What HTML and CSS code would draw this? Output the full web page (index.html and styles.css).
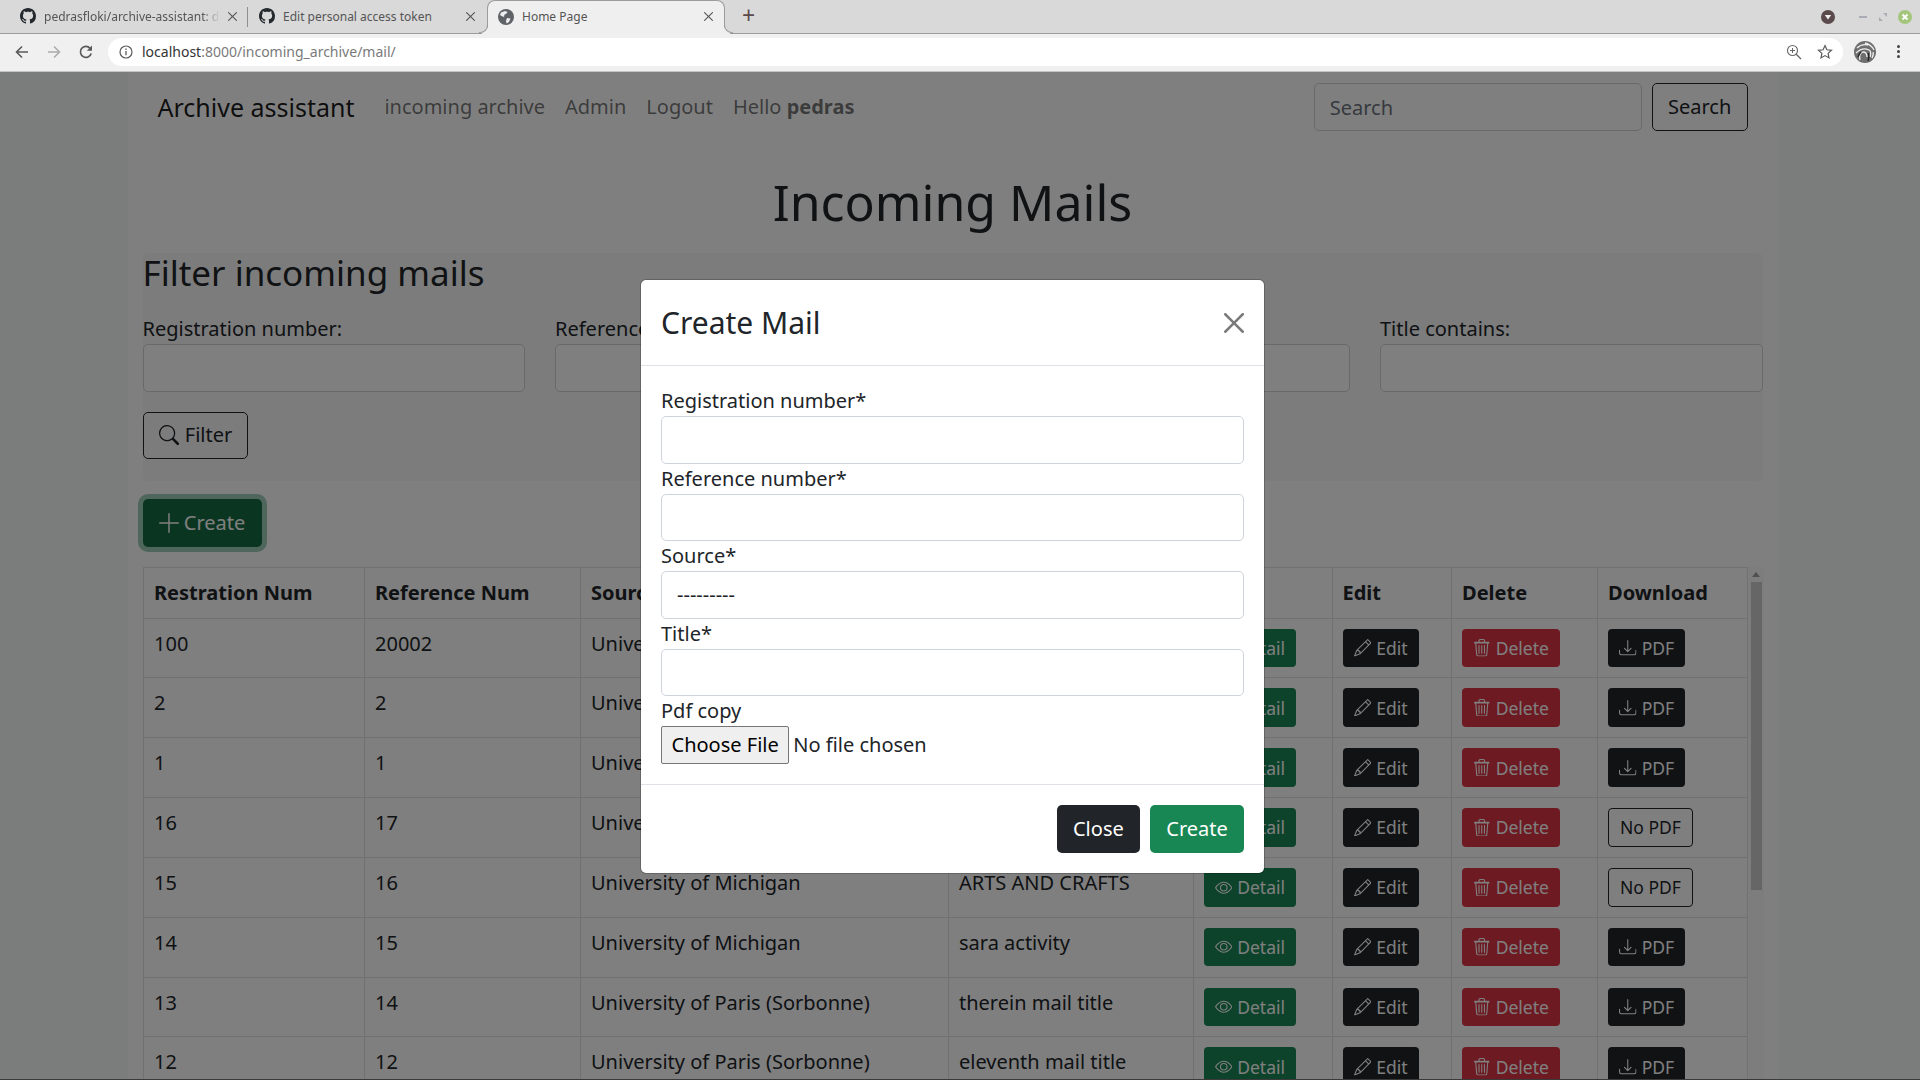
FILE: index.html
```html
<!DOCTYPE html>
<html>
<head>
  <title>Home Page</title>
  <link rel="stylesheet" href="styles.css">
</head>
<body>
  <svg class="icon-defs" width="0" height="0">
    <symbol id="i-eye" viewBox="0 0 16 16"><path d="M16 8s-3-5.5-8-5.5S0 8 0 8s3 5.5 8 5.5S16 8 16 8zM1.173 8a13.133 13.133 0 0 1 1.66-2.043C4.12 4.668 5.88 3.5 8 3.5c2.12 0 3.879 1.168 5.168 2.457A13.133 13.133 0 0 1 14.828 8c-.058.087-.122.183-.195.288-.335.48-.83 1.12-1.465 1.755C11.879 11.332 10.119 12.5 8 12.5c-2.12 0-3.879-1.168-5.168-2.457A13.134 13.134 0 0 1 1.172 8z"/><path d="M8 5.5a2.5 2.5 0 1 0 0 5 2.5 2.5 0 0 0 0-5zM4.5 8a3.5 3.5 0 1 1 7 0 3.5 3.5 0 0 1-7 0z"/></symbol>
    <symbol id="i-pencil" viewBox="0 0 16 16"><path d="M12.146.146a.5.5 0 0 1 .708 0l3 3a.5.5 0 0 1 0 .708l-10 10a.5.5 0 0 1-.168.11l-5 2a.5.5 0 0 1-.65-.65l2-5a.5.5 0 0 1 .11-.168l10-10zM11.207 2.5 13.5 4.793 14.793 3.5 12.5 1.207 11.207 2.5zm1.586 3L10.5 3.207 4 9.707V10h.5a.5.5 0 0 1 .5.5v.5h.5a.5.5 0 0 1 .5.5v.5h.293l6.5-6.5zm-9.761 5.175-.106.106-1.528 3.821 3.821-1.528.106-.106A.5.5 0 0 1 5 12.5V12h-.5a.5.5 0 0 1-.5-.5V11h-.5a.5.5 0 0 1-.468-.325z"/></symbol>
    <symbol id="i-trash" viewBox="0 0 16 16"><path d="M6.5 1h3a.5.5 0 0 1 .5.5v1H6v-1a.5.5 0 0 1 .5-.5ZM11 2.5v-1A1.5 1.5 0 0 0 9.5 0h-3A1.5 1.5 0 0 0 5 1.5v1H1.5a.5.5 0 0 0-.5.5v1h1.04l.85 10.66A2 2 0 0 0 4.88 16h6.24a2 2 0 0 0 1.99-1.84L13.96 4H15V3a.5.5 0 0 0-.5-.5H11Zm1.96 1.5-.85 10.08a1 1 0 0 1-1 .92H4.89a1 1 0 0 1-1-.92L3.04 4h9.92ZM5.5 5.5a.5.5 0 0 1 .5.5v7a.5.5 0 0 1-1 0V6a.5.5 0 0 1 .5-.5Zm2.5 0a.5.5 0 0 1 .5.5v7a.5.5 0 0 1-1 0V6a.5.5 0 0 1 .5-.5Zm2.5 0a.5.5 0 0 1 .5.5v7a.5.5 0 0 1-1 0V6a.5.5 0 0 1 .5-.5Z"/></symbol>
    <symbol id="i-download" viewBox="0 0 16 16"><path d="M.5 9.9a.5.5 0 0 1 .5.5v2.5a1 1 0 0 0 1 1h12a1 1 0 0 0 1-1v-2.5a.5.5 0 0 1 1 0v2.5a2 2 0 0 1-2 2H2a2 2 0 0 1-2-2v-2.5a.5.5 0 0 1 .5-.5z"/><path d="M7.646 11.854a.5.5 0 0 0 .708 0l3-3a.5.5 0 0 0-.708-.708L8.5 10.293V1.5a.5.5 0 0 0-1 0v8.793L5.354 8.146a.5.5 0 1 0-.708.708l3 3z"/></symbol>
    <symbol id="i-search" viewBox="0 0 16 16"><path d="M11.742 10.344a6.5 6.5 0 1 0-1.397 1.398h-.001c.03.04.062.078.098.115l3.85 3.85a1 1 0 0 0 1.415-1.414l-3.85-3.85a1.007 1.007 0 0 0-.115-.1zM12 6.5a5.5 5.5 0 1 1-11 0 5.5 5.5 0 0 1 11 0z"/></symbol>
    <symbol id="i-plus" viewBox="0 0 16 16"><path d="M8 0a.6.6 0 0 1 .6.6v6.8h6.8a.6.6 0 0 1 0 1.2H8.6v6.8a.6.6 0 0 1-1.2 0V8.6H.6a.6.6 0 0 1 0-1.2h6.8V.6A.6.6 0 0 1 8 0z"/></symbol>
    <symbol id="i-github" viewBox="0 0 16 16"><path d="M8 0C3.58 0 0 3.58 0 8c0 3.54 2.29 6.53 5.47 7.59.4.07.55-.17.55-.38 0-.19-.01-.82-.01-1.49-2.01.37-2.53-.49-2.69-.94-.09-.23-.48-.94-.82-1.13-.28-.15-.68-.52-.01-.53.63-.01 1.08.58 1.23.82.72 1.21 1.87.87 2.33.66.07-.52.28-.87.51-1.07-1.78-.2-3.64-.89-3.64-3.95 0-.87.31-1.59.82-2.15-.08-.2-.36-1.02.08-2.12 0 0 .67-.21 2.2.82.64-.18 1.32-.27 2-.27.68 0 1.36.09 2 .27 1.53-1.04 2.2-.82 2.2-.82.44 1.1.16 1.92.08 2.12.51.56.82 1.27.82 2.15 0 3.07-1.87 3.75-3.65 3.95.29.25.54.73.54 1.48 0 1.07-.01 1.93-.01 2.2 0 .21.15.46.55.38A8.013 8.013 0 0016 8c0-4.42-3.58-8-8-8z"/></symbol>
    <symbol id="i-x" viewBox="0 0 16 16"><path d="M.293.293a1 1 0 011.414 0L8 6.586 14.293.293a1 1 0 111.414 1.414L9.414 8l6.293 6.293a1 1 0 01-1.414 1.414L8 9.414l-6.293 6.293a1 1 0 01-1.414-1.414L6.586 8 .293 1.707a1 1 0 010-1.414z"/></symbol>
  </svg>

  <!-- Browser chrome -->
  <div class="tab-strip">
    <div class="tab">
      <svg class="tab-icon"><use href="#i-github"/></svg>
      <span class="tab-title tab-fade">pedrasfloki/archive-assistant: django app</span>
      <svg class="tab-close"><use href="#i-x"/></svg>
    </div>
    <div class="tab tab-sep">
      <svg class="tab-icon"><use href="#i-github"/></svg>
      <span class="tab-title">Edit personal access token</span>
      <svg class="tab-close"><use href="#i-x"/></svg>
    </div>
    <div class="tab tab-active">
      <svg class="tab-icon" viewBox="0 0 16 16">
        <circle cx="8" cy="8" r="8" fill="#5f6368"/>
        <path d="M3 3.5 7 2l2.5 1L8 5 6.5 5.5 6 8 3.5 7 2 6zM9 9l3.5 0.5L11 13l-2.5 1.5L8 12z" fill="#efefef"/>
      </svg>
      <span class="tab-title">Home Page</span>
      <svg class="tab-close"><use href="#i-x"/></svg>
    </div>
    <div class="tab-new">+</div>
    <div class="window-controls">
      <svg class="win-menu" viewBox="0 0 14 14"><circle cx="7" cy="7" r="7" fill="#5b4a4c"/><path d="M3.8 5h6.4L7 9.5z" fill="#efefef"/></svg>
      <span class="win-min"></span>
      <svg class="win-restore" viewBox="0 0 8 8"><path d="M4 0h4v4zM0 4l4 4H0z" fill="#a9adb3"/></svg>
      <svg class="win-close" viewBox="0 0 14 14"><circle cx="7" cy="7" r="7" fill="#a3c67c"/><path d="M4.5 4.5l5 5m0-5l-5 5" stroke="#fff" stroke-width="1.8"/></svg>
    </div>
  </div>
  <div class="toolbar">
    <svg class="nav-icon" viewBox="0 0 16 16"><path d="M14 8H3m5-5.5L2.5 8 8 13.5" fill="none" stroke="#5a5a5a" stroke-width="1.6"/></svg>
    <svg class="nav-icon" viewBox="0 0 16 16"><path d="M2 8h11M8 2.5 13.5 8 8 13.5" fill="none" stroke="#acacac" stroke-width="1.6"/></svg>
    <svg class="nav-icon" viewBox="0 0 16 16"><path d="M13.2 9.5A5.5 5.5 0 1 1 12 4.2" fill="none" stroke="#5a5a5a" stroke-width="1.7"/><path d="M14 1.5v5.2H8.8z" fill="#5a5a5a"/></svg>
    <div class="address-bar">
      <svg class="info-icon" viewBox="0 0 14 14"><circle cx="7" cy="7" r="6" fill="none" stroke="#5a5a5a" stroke-width="1.2"/><path d="M7 6v4.2M7 3.6v1.3" stroke="#5a5a5a" stroke-width="1.3"/></svg>
      <span class="url"><span class="url-host">localhost</span>:8000/incoming_archive/mail/</span>
      <svg class="addr-icon" viewBox="0 0 16 16"><circle cx="6.5" cy="6.5" r="5" fill="none" stroke="#666" stroke-width="1.1"/><path d="M10.2 10.2 15 15" stroke="#666" stroke-width="1.3"/><path d="M6.5 4v5M4 6.5h5" stroke="#666"/></svg>
      <svg class="addr-icon" viewBox="0 0 16 16"><path d="M8 1.6l1.9 4.2 4.6.5-3.4 3.1.9 4.5-4-2.3-4 2.3.9-4.5-3.4-3.1 4.6-.5z" fill="none" stroke="#5a5a5a" stroke-width="1.2"/></svg>
    </div>
    <svg class="avatar" viewBox="0 0 22 22">
      <circle cx="11" cy="11" r="11" fill="#6e6e6e"/>
      <path d="M3 7c3-3 7-4 11-3M2 12c4-4 9-5 13-3 2 1 2 4 1 7M6 19c-1-4 0-7 3-8 3 0 4 2 4 5M11 2c4 1 7 3 9 7M18 17c1-2 2-4 1-6" fill="none" stroke="#ececec" stroke-width="1.3"/>
      <path d="M4 16c1-2 1-3 3-5M14 12c1 2 1 5 0 8" fill="none" stroke="#222" stroke-width="1.4"/>
    </svg>
    <span class="menu-dots"><i></i><i></i><i></i></span>
  </div>

  <div class="viewport">
    <div class="page-wrap">
      <div class="container">
        <nav class="navbar">
          <span class="brand">Archive assistant</span>
          <a class="nav-link">incoming archive</a>
          <a class="nav-link">Admin</a>
          <a class="nav-link">Logout</a>
          <span class="nav-link">Hello <b>pedras</b></span>
          <form class="nav-search">
            <input class="form-control" type="text" placeholder="Search">
            <button class="btn btn-outline-dark" type="button">Search</button>
          </form>
        </nav>

        <h1 class="page-title">Incoming Mails</h1>

        <div class="filter-box">
          <h2 class="filter-title">Filter incoming mails</h2>
          <div class="filter-grid">
            <div><label>Registration number:</label><input class="form-control" type="text"></div>
            <div><label>Reference number:</label><input class="form-control" type="text"></div>
            <div><label>Source:</label><input class="form-control" type="text"></div>
            <div><label>Title contains:</label><input class="form-control" type="text"></div>
          </div>
          <button class="btn btn-outline-dark btn-filter" type="button"><svg class="btn-icon-lg"><use href="#i-search"/></svg> Filter</button>
        </div>

        <button class="btn btn-create" type="button"><svg class="btn-icon-lg"><use href="#i-plus"/></svg> Create</button>

        <div class="table-wrap">
          <table class="mail-table">
            <thead>
              <tr>
                <th>Restration Num</th>
                <th>Reference Num</th>
                <th>Source</th>
                <th>Title</th>
                <th>Detail</th>
                <th>Edit</th>
                <th>Delete</th>
                <th>Download</th>
              </tr>
            </thead>
            <tbody>
              <tr>
                <td>100</td><td>20002</td><td>University of Michigan</td><td>test mail</td>
                <td><a class="btn-sm btn-green"><svg><use href="#i-eye"/></svg> Detail</a></td>
                <td><a class="btn-sm btn-dark"><svg><use href="#i-pencil"/></svg> Edit</a></td>
                <td><a class="btn-sm btn-red"><svg><use href="#i-trash"/></svg> Delete</a></td>
                <td><a class="btn-sm btn-dark"><svg><use href="#i-download"/></svg> PDF</a></td>
              </tr>
              <tr>
                <td>2</td><td>2</td><td>University of Michigan</td><td>second mail</td>
                <td><a class="btn-sm btn-green"><svg><use href="#i-eye"/></svg> Detail</a></td>
                <td><a class="btn-sm btn-dark"><svg><use href="#i-pencil"/></svg> Edit</a></td>
                <td><a class="btn-sm btn-red"><svg><use href="#i-trash"/></svg> Delete</a></td>
                <td><a class="btn-sm btn-dark"><svg><use href="#i-download"/></svg> PDF</a></td>
              </tr>
              <tr>
                <td>1</td><td>1</td><td>University of Michigan</td><td>first mail</td>
                <td><a class="btn-sm btn-green"><svg><use href="#i-eye"/></svg> Detail</a></td>
                <td><a class="btn-sm btn-dark"><svg><use href="#i-pencil"/></svg> Edit</a></td>
                <td><a class="btn-sm btn-red"><svg><use href="#i-trash"/></svg> Delete</a></td>
                <td><a class="btn-sm btn-dark"><svg><use href="#i-download"/></svg> PDF</a></td>
              </tr>
              <tr>
                <td>16</td><td>17</td><td>University of Michigan</td><td>sports day</td>
                <td><a class="btn-sm btn-green"><svg><use href="#i-eye"/></svg> Detail</a></td>
                <td><a class="btn-sm btn-dark"><svg><use href="#i-pencil"/></svg> Edit</a></td>
                <td><a class="btn-sm btn-red"><svg><use href="#i-trash"/></svg> Delete</a></td>
                <td><a class="btn-sm btn-outline">No PDF</a></td>
              </tr>
              <tr>
                <td>15</td><td>16</td><td>University of Michigan</td><td>ARTS AND CRAFTS</td>
                <td><a class="btn-sm btn-green"><svg><use href="#i-eye"/></svg> Detail</a></td>
                <td><a class="btn-sm btn-dark"><svg><use href="#i-pencil"/></svg> Edit</a></td>
                <td><a class="btn-sm btn-red"><svg><use href="#i-trash"/></svg> Delete</a></td>
                <td><a class="btn-sm btn-outline">No PDF</a></td>
              </tr>
              <tr>
                <td>14</td><td>15</td><td>University of Michigan</td><td>sara activity</td>
                <td><a class="btn-sm btn-green"><svg><use href="#i-eye"/></svg> Detail</a></td>
                <td><a class="btn-sm btn-dark"><svg><use href="#i-pencil"/></svg> Edit</a></td>
                <td><a class="btn-sm btn-red"><svg><use href="#i-trash"/></svg> Delete</a></td>
                <td><a class="btn-sm btn-dark"><svg><use href="#i-download"/></svg> PDF</a></td>
              </tr>
              <tr>
                <td>13</td><td>14</td><td>University of Paris (Sorbonne)</td><td>therein mail title</td>
                <td><a class="btn-sm btn-green"><svg><use href="#i-eye"/></svg> Detail</a></td>
                <td><a class="btn-sm btn-dark"><svg><use href="#i-pencil"/></svg> Edit</a></td>
                <td><a class="btn-sm btn-red"><svg><use href="#i-trash"/></svg> Delete</a></td>
                <td><a class="btn-sm btn-dark"><svg><use href="#i-download"/></svg> PDF</a></td>
              </tr>
              <tr>
                <td>12</td><td>12</td><td>University of Paris (Sorbonne)</td><td>eleventh mail title</td>
                <td><a class="btn-sm btn-green"><svg><use href="#i-eye"/></svg> Detail</a></td>
                <td><a class="btn-sm btn-dark"><svg><use href="#i-pencil"/></svg> Edit</a></td>
                <td><a class="btn-sm btn-red"><svg><use href="#i-trash"/></svg> Delete</a></td>
                <td><a class="btn-sm btn-dark"><svg><use href="#i-download"/></svg> PDF</a></td>
              </tr>
            </tbody>
          </table>
          <div class="scrollbar">
            <div class="scroll-up"></div>
            <div class="scroll-thumb"></div>
          </div>
        </div>
      </div>
    </div>

    <!-- Create Mail Modal -->
    <div class="backdrop">
      <div class="modal">
        <div class="modal-header">
          <div class="modal-title">Create Mail</div>
          <svg class="modal-close"><use href="#i-x"/></svg>
        </div>
        <div class="modal-body">
          <label>Registration number*</label>
          <input class="form-control" type="text">
          <label>Reference number*</label>
          <input class="form-control" type="text">
          <label>Source*</label>
          <select class="form-control"><option>---------</option></select>
          <label>Title*</label>
          <input class="form-control" type="text">
          <label>Pdf copy</label>
          <input class="file-input" type="file">
        </div>
        <div class="modal-footer">
          <button class="btn btn-close-modal" type="button">Close</button>
          <button class="btn btn-submit" type="button">Create</button>
        </div>
      </div>
    </div>
  </div>
  <div class="window-edge"></div>
</body>
</html>
```

FILE: styles.css
```css
* {
  box-sizing: border-box;
}
html, body {
  margin: 0;
  height: 1080px;
  overflow: hidden;
}
body {
  font-family: 'Noto Sans', sans-serif;
  font-size: 20px;
  line-height: 30px;
  color: #212529;
  background-color: #f5faf6;
}
.icon-defs {
  position: absolute;
}

/* browser chrome */
.tab-strip {
  display: flex;
  align-items: flex-start;
  height: 34px;
  padding-left: 10px;
  background-color: #d9d9d9;
  border-bottom: 1px solid #9c9c9c;
  font-size: 12px;
  line-height: 31px;
  color: #555;
}
.tab {
  position: relative;
  display: flex;
  align-items: center;
  gap: 8px;
  width: 238px;
  height: 33px;
  padding: 0 11px 1px 10px;
}
.tab-sep {
  padding-left: 11px;
}
.tab-sep:before {
  content: "";
  position: absolute;
  left: -1px;
  top: 7px;
  height: 20px;
  border-left: 1px solid #8f8f8f;
}
.tab-active {
  height: 34px;
  margin-left: 1px;
  padding-left: 10px;
  padding-bottom: 2px;
  background-color: #efefef;
  border: 1px solid #9c9c9c;
  border-bottom: none;
  border-radius: 8px 8px 0 0;
  z-index: 1;
}
.tab-active:before, .tab-active:after {
  content: "";
  position: absolute;
  bottom: 1px;
  width: 8px;
  height: 8px;
  border-bottom: 1px solid #9c9c9c;
}
.tab-active:before {
  left: -9px;
  border-right: 1px solid #9c9c9c;
  border-bottom-right-radius: 8px;
  box-shadow: 3px 3px 0 #efefef;
}
.tab-active:after {
  right: -9px;
  border-left: 1px solid #9c9c9c;
  border-bottom-left-radius: 8px;
  box-shadow: -3px 3px 0 #efefef;
}
.tab-icon {
  flex: none;
  width: 16px;
  height: 16px;
  fill: #24292e;
}
.tab-title {
  flex: 1;
  overflow: hidden;
  white-space: nowrap;
}
.tab-fade {
  -webkit-mask-image: linear-gradient(to right, #000 90%, transparent);
  mask-image: linear-gradient(to right, #000 90%, transparent);
}
.tab-close {
  flex: none;
  width: 9px;
  height: 9px;
  fill: #555;
}
.tab-new {
  margin-left: 17px;
  font-size: 23px;
  color: #5b4a4c;
}
.window-controls {
  display: flex;
  align-items: center;
  height: 33px;
  margin-left: auto;
  padding-right: 8px;
}
.win-menu {
  width: 14px;
  height: 14px;
  margin-right: 24.5px;
}
.win-min {
  width: 8px;
  height: 2px;
  background-color: #a9adb3;
  margin-right: 11.5px;
}
.win-restore {
  width: 8px;
  height: 8px;
  margin-right: 11.5px;
}
.win-close {
  width: 14px;
  height: 14px;
}
.toolbar {
  display: flex;
  align-items: center;
  height: 38px;
  padding: 3px 10px 5px 14px;
  background-color: #f0f0f0;
  border-bottom: 1px solid #c4c4c4;
}
.nav-icon {
  flex: none;
  width: 16px;
  height: 16px;
  margin-right: 16px;
}
.address-bar {
  display: flex;
  align-items: center;
  width: 1735px;
  height: 28px;
  margin-left: -2px;
  padding: 0 10px 0 11px;
  background-color: white;
  border-radius: 14px;
  font-size: 14px;
  color: #7a7a7a;
}
.info-icon {
  width: 14px;
  height: 14px;
  margin-right: 9px;
}
.url {
  flex: 1;
  line-height: 28px;
}
.url-host {
  color: #333;
}
.addr-icon {
  width: 16px;
  height: 16px;
  margin-left: 15px;
}
.avatar {
  flex: none;
  width: 22px;
  height: 22px;
  margin-left: 11px;
}
.menu-dots {
  display: flex;
  flex-direction: column;
  gap: 2px;
  margin-left: 21px;
}
.menu-dots i {
  width: 3px;
  height: 3px;
  border-radius: 50%;
  background-color: #444;
}

/* page */
.viewport {
  position: relative;
  height: 1008px;
  overflow: hidden;
}
.page-wrap {
  width: 1905px;
}
.container {
  width: 1650px;
  margin: 0 auto;
  padding: 0 15px 40px;
  background-color: white;
}
.navbar {
  display: flex;
  align-items: center;
  height: 70px;
  margin: 0 -15px;
  padding: 0 30px;
}
.brand {
  font-size: 25px;
  line-height: 38px;
  margin-right: 20px;
  color: rgba(0, 0, 0, 0.9);
}
.nav-link {
  padding: 0 10px;
  color: rgba(0, 0, 0, 0.55);
}
.nav-search {
  display: flex;
  gap: 10px;
  margin-left: auto;
}
.nav-search .form-control {
  width: 328px;
}
.form-control {
  display: block;
  width: 100%;
  height: 47.5px;
  padding: 0 15px;
  font: inherit;
  color: #212529;
  background-color: white;
  border: 1px solid #ced4da;
  border-radius: 5px;
  appearance: none;
  -webkit-appearance: none;
}
.form-control::placeholder {
  color: #6c757d;
}
.btn {
  height: 47.5px;
  padding: 0 15.25px;
  font: inherit;
  border: 1px solid transparent;
  border-radius: 5px;
}
.btn-outline-dark {
  color: #212529;
  background: transparent;
  border-color: #212529;
}
.page-title {
  margin: 30px 0 21px;
  font-size: 50px;
  font-weight: 400;
  line-height: 60px;
  text-align: center;
}
.filter-box {
  padding: 0 0 22px;
  background-color: #f8f9fa;
  border-radius: 5px;
}
.filter-title {
  margin: 0 0 21px;
  font-size: 35px;
  font-weight: 400;
  line-height: 40px;
}
.filter-grid {
  display: grid;
  grid-template-columns: repeat(4, 1fr);
  gap: 30px;
}
.filter-grid label {
  display: block;
}
.btn-filter {
  display: inline-flex;
  align-items: center;
  gap: 6px;
  height: 47px;
  margin-top: 20px;
}
.btn-icon-lg {
  width: 20px;
  height: 20px;
  fill: currentColor;
}
.btn-create {
  display: flex;
  align-items: center;
  gap: 5px;
  margin: 18px 0 20px;
  height: 48px;
  color: white;
  background-color: #146c43;
  box-shadow: 0 0 0 5px rgba(60, 153, 110, 0.5);
}
.table-wrap {
  display: flex;
}
.mail-table {
  flex: none;
  width: 1605px;
  table-layout: fixed;
  border-collapse: collapse;
}
.mail-table th, .mail-table td {
  padding: 10px;
  border: 1px solid #dee2e6;
  text-align: left;
  vertical-align: top;
}
.mail-table th:nth-child(-n+4), .mail-table td:nth-child(-n+4) {
  padding-left: 10.5px;
}
.mail-table td {
  height: 59.85px;
}
.mail-table th:nth-child(1) { width: 221px; }
.mail-table th:nth-child(2) { width: 216px; }
.mail-table th:nth-child(3) { width: 368px; }
.mail-table th:nth-child(4) { width: 245px; }
.mail-table th:nth-child(5) { width: 139px; }
.mail-table th:nth-child(6) { width: 119.5px; }
.mail-table th:nth-child(7) { width: 146px; }
.btn-sm {
  display: inline-flex;
  align-items: center;
  gap: 5px;
  height: 38.75px;
  padding: 0 10.2px;
  font-size: 17.5px;
  line-height: 26px;
  color: white;
  border: 1px solid transparent;
  border-radius: 4px;
  vertical-align: top;
}
.btn-sm svg {
  width: 17.5px;
  height: 17.5px;
  fill: currentColor;
}
.btn-green {
  background-color: #198754;
}
.btn-dark {
  background-color: #212529;
}
.btn-red {
  background-color: #dc3545;
}
.btn-outline {
  padding: 0 11px;
  color: #212529;
  border-color: #212529;
}
.scrollbar {
  flex: none;
  width: 15px;
  margin-left: 1px;
  background-color: #fafafa;
}
.scroll-up {
  height: 15px;
  position: relative;
}
.scroll-up:after {
  content: "";
  position: absolute;
  left: 3px;
  top: 5px;
  border: 4px solid transparent;
  border-top: none;
  border-bottom: 5px solid #a0a0a0;
}
.scroll-thumb {
  width: 11px;
  height: 308px;
  margin-left: 2px;
  background-color: #cdcdcd;
}

/* modal */
.backdrop {
  position: absolute;
  top: 0;
  left: 0;
  width: 100%;
  height: 100%;
  padding: 207px 15px 0 0;
  display: flex;
  justify-content: center;
  align-items: flex-start;
  background-color: rgba(0, 0, 0, 0.5);
}
.modal {
  width: 625px;
  background-color: white;
  border: 1px solid rgba(0, 0, 0, 0.2);
  border-radius: 6px;
  background-clip: padding-box;
}
.modal-header {
  display: flex;
  align-items: center;
  justify-content: space-between;
  height: 86px;
  padding: 0 20px;
  border-bottom: 1px solid #dee2e6;
}
.modal-title {
  font-size: 30px;
  line-height: 45px;
}
.modal-close {
  width: 20px;
  height: 20px;
  fill: #7a7a7a;
}
.modal-body {
  padding: 20px;
}
.modal-body label {
  display: block;
}
.file-input {
  display: block;
  font: inherit;
  height: 38px;
  width: 100%;
}
.file-input::file-selector-button {
  font: inherit;
  height: 38px;
  padding: 0 9.5px;
  margin-right: 4px;
  background-color: #efefef;
  border: 1px solid #767676;
  border-radius: 2px;
  color: black;
}
.modal-footer {
  display: flex;
  justify-content: flex-end;
  gap: 10px;
  padding: 20px;
  border-top: 1px solid #dee2e6;
}
.btn-close-modal {
  color: white;
  background-color: #212529;
}
.btn-submit {
  color: white;
  background-color: #198754;
}
.window-edge {
  position: absolute;
  left: 0;
  right: 0;
  top: 1079px;
  height: 1px;
  background-color: #3a3a3a;
}
```
